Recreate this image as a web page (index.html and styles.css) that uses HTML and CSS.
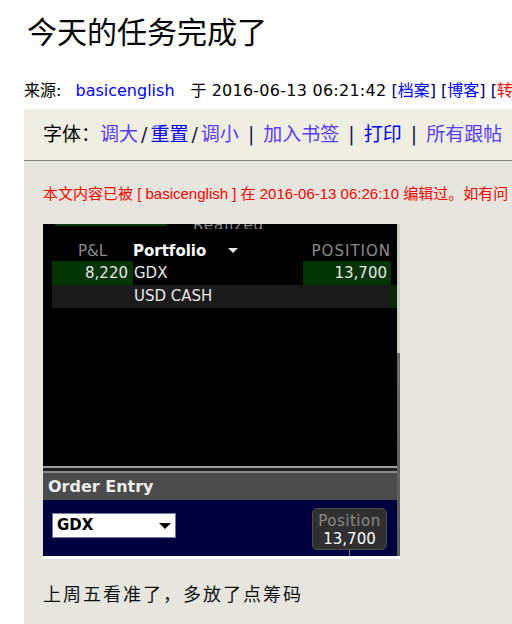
FILE: index.html
```html
<!DOCTYPE html>
<html lang="zh">

<head>
    <meta charset="UTF-8">
    <title>今天的任务完成了</title>
    <link rel="stylesheet" href="styles.css">
</head>

<body>
    <div class="page">
        <h1 class="title">今天的任务完成了</h1>

        <div class="meta">来源: <a class="author" href="#">basicenglish</a>于 <span class="date">2016-06-13 06:21:42</span> <span class="br">[</span><a href="#">档案</a><span class="br">]</span> <span class="br">[</span><a href="#">博客</a><span class="br">]</span> <span class="br">[</span><a class="hot" href="#">转</a></div>

        <div class="post">
            <div class="toolbar">
                字体：<a class="v" href="#">调大</a><span class="slash">/</span><a href="#">重置</a><span class="slash">/</span><a class="v" href="#">调小</a><span class="sep">|</span><a class="v" href="#">加入书签</a><span class="sep">|</span><a href="#">打印</a><span class="sep">|</span><a class="v" href="#">所有跟帖</a><span class="sep">|</span>
            </div>

            <div class="content">
                <p class="edit-note">本文内容已被 [ basicenglish ] 在 2016-06-13 06:26:10 编辑过。如有问</p>

                <!-- trading platform screenshot -->
                <div class="shot">
                    <div class="shot-body">
                        <div class="shot-main">
                            <div class="pf-top">
                                <span class="pf-bar"></span>
                                <span class="pf-cut">Realized</span>
                            </div>
                            <div class="pf-head">
                                <span class="c-pnl">P&amp;L</span>
                                <span class="c-sym">Portfolio <i class="caret"></i></span>
                                <span class="c-pos">POSITION</span>
                                <span></span>
                            </div>
                            <div class="pf-row">
                                <span class="c-pnl up">8,220</span>
                                <span class="c-sym">GDX</span>
                                <span class="c-pos up">13,700</span>
                                <span></span>
                            </div>
                            <div class="pf-row cash">
                                <span class="c-pnl"></span>
                                <span class="c-sym">USD CASH</span>
                                <span class="c-pos"></span>
                                <span class="edge"></span>
                            </div>
                            <div class="pf-fill"></div>
                            <div class="oe-rule"></div>
                            <div class="oe-head">Order Entry</div>
                            <div class="oe-body">
                                <div class="oe-select">GDX <i class="caret dark"></i></div>
                                <div class="oe-pos">
                                    <div class="pos-box">
                                        <div class="pos-label">Position</div>
                                        <div class="pos-num">13,700</div>
                                    </div>
                                    <div class="pos-stem"></div>
                                </div>
                            </div>
                        </div>
                        <div class="shot-scroll"></div>
                    </div>
                    <div class="shot-foot"></div>
                </div>

                <p class="text">上周五看准了，多放了点筹码</p>
            </div>
        </div>
    </div>
</body>

</html>
```

FILE: styles.css
```css
html,
body {
    margin: 0;
    overflow: hidden;
    background: #fff;
}

.page {
    width: 520px;
    padding-left: 24px;
    font-family: "DejaVu Sans", "Noto Sans CJK SC", sans-serif;
    color: #000;
}

a {
    color: #0000ff;
    text-decoration: none;
}

.title {
    margin: 12px 0 0;
    padding-left: 3px;
    font-family: "Noto Sans CJK SC", serif;
    font-size: 30px;
    font-weight: normal;
    line-height: 36px;
}

.meta {
    margin-top: 33px;
    font-size: 16px;
    line-height: 20px;
    white-space: nowrap;
}

.meta .author {
    margin: 0 16px 0 9px;
}

.meta .date {
    letter-spacing: 0.25px;
}

.meta .br {
    color: #000066;
}

.meta .hot {
    color: #ff0000;
}

.post {
    margin-top: 8px;
    background: #e6e6de;
    min-height: 600px;
}

.toolbar {
    padding: 12px 0 14px 19px;
    background: #eeeee2;
    border-bottom: 1px solid #808080;
    font-family: "Noto Sans CJK SC", sans-serif;
    font-size: 19px;
    line-height: 24px;
    white-space: nowrap;
}

.toolbar .v {
    color: #5a3cff;
}

.slash {
    margin: 0 3px;
    font-family: "DejaVu Sans", sans-serif;
    color: #1a1a40;
}

.sep {
    margin: 0 9px;
    font-family: "DejaVu Sans", sans-serif;
    color: #1a1a50;
}

.content {
    padding: 23px 19px 0;
}

.edit-note {
    margin: 0;
    font-family: "Liberation Sans", "Noto Sans CJK SC", sans-serif;
    font-size: 15px;
    line-height: 20px;
    color: #ff0000;
    white-space: nowrap;
}

/* screenshot */
.shot {
    margin-top: 20px;
    width: 357px;
    height: 335px;
    display: flex;
    flex-direction: column;
    background: #000;
    font-family: "DejaVu Sans", sans-serif;
    font-size: 15px;
}

.shot-body {
    flex: 1;
    display: flex;
}

.shot-main {
    flex: 1;
    display: flex;
    flex-direction: column;
}

.shot-scroll {
    width: 3px;
    background: linear-gradient(#cfcfca 0, #cfcfca 129px, #6a6a6a 129px, #5a5a5a 100%);
}

.shot-foot {
    height: 3px;
    background: #fafafa;
}

.pf-top {
    height: 5px;
    overflow: hidden;
    display: flex;
    align-items: flex-end;
}

.pf-bar {
    align-self: flex-start;
    margin-left: 12px;
    width: 112px;
    height: 2px;
    background: #0b3a0b;
}

.pf-cut {
    margin-left: 26px;
    margin-bottom: -1px;
    line-height: 10px;
    color: #8a8a8a;
    letter-spacing: 1px;
}

.pf-head,
.pf-row {
    display: grid;
    grid-template-columns: 81px 1fr 88px 6px;
    margin-left: 9px;
}

.pf-head {
    height: 32px;
    padding-top: 13px;
    box-sizing: border-box;
    line-height: 19px;
}

.pf-head .c-pnl {
    text-align: center;
    color: #8c8c8c;
}

.pf-head .c-sym {
    font-weight: bold;
    color: #fff;
}

.pf-head .c-pos {
    text-align: right;
    color: #8c8c8c;
    letter-spacing: 1px;
}

.caret {
    display: inline-block;
    margin-left: 16px;
    vertical-align: 3px;
    border-left: 5px solid transparent;
    border-right: 5px solid transparent;
    border-top: 5px solid #e6e6e6;
}

.pf-row {
    height: 24px;
    line-height: 24px;
    color: #e8e8e8;
}

.pf-row .c-sym {
    padding-left: 1px;
}

.pf-row .c-pnl {
    text-align: right;
    padding-right: 5px;
}

.pf-row .c-pos {
    text-align: right;
    padding-right: 4px;
}

.pf-row .up {
    background: #033403;
}

.pf-row.cash {
    height: 23px;
    line-height: 23px;
}

.pf-row.cash span {
    background: #1b1b1b;
}

.pf-row.cash .edge {
    background: #032a03;
}

.pf-fill {
    flex: 1;
}

.oe-rule {
    height: 3px;
    background: #1e1e1e;
    border-top: 2px solid #9c9c9c;
    border-bottom: 2px solid #8a8a8a;
}

.oe-head {
    height: 27px;
    padding-left: 5px;
    background: #4b4b4b;
    color: #ececec;
    font-size: 16px;
    font-weight: bold;
    line-height: 28px;
}

.oe-body {
    height: 56px;
    display: flex;
    justify-content: space-between;
    align-items: flex-start;
    padding: 0 10px 0 9px;
    background: #00003f;
}

.oe-select {
    margin-top: 13px;
    width: 124px;
    height: 25px;
    box-sizing: border-box;
    display: flex;
    align-items: center;
    justify-content: space-between;
    padding: 0 4px 0 4px;
    background: #fff;
    border: 1px solid #77779a;
    color: #000;
    font-weight: bold;
    line-height: 23px;
}

.caret.dark {
    margin-left: 0;
    vertical-align: 0;
    border-left-width: 6px;
    border-right-width: 6px;
    border-top: 6px solid #000;
}

.oe-pos {
    margin-top: 8px;
    display: flex;
    flex-direction: column;
    align-items: center;
}

.pos-box {
    width: 75px;
    height: 42px;
    box-sizing: border-box;
    padding-top: 3px;
    background: #303030;
    border: 1px solid #4e4e4e;
    border-radius: 5px;
    text-align: center;
    line-height: 18px;
}

.pos-label {
    color: #8a8a8a;
    font-size: 15px;
    letter-spacing: 0.5px;
}

.pos-num {
    color: #fff;
}

.pos-stem {
    width: 1px;
    height: 6px;
    background: #777;
}

.text {
    margin: 22px 0 0;
    font-family: "Noto Sans CJK SC", sans-serif;
    font-size: 18px;
    line-height: 24px;
    letter-spacing: 2px;
    color: #111;
}
```
